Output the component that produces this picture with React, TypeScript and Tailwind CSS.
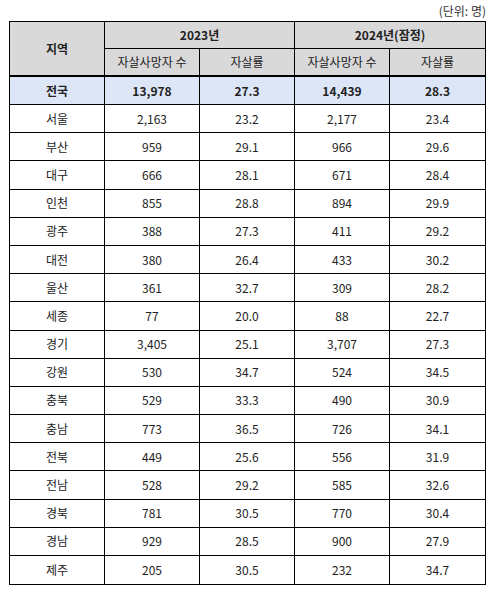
import React from "react";

const rows: [string, string, string, string, string][] = [
  ["서울", "2,163", "23.2", "2,177", "23.4"],
  ["부산", "959", "29.1", "966", "29.6"],
  ["대구", "666", "28.1", "671", "28.4"],
  ["인천", "855", "28.8", "894", "29.9"],
  ["광주", "388", "27.3", "411", "29.2"],
  ["대전", "380", "26.4", "433", "30.2"],
  ["울산", "361", "32.7", "309", "28.2"],
  ["세종", "77", "20.0", "88", "22.7"],
  ["경기", "3,405", "25.1", "3,707", "27.3"],
  ["강원", "530", "34.7", "524", "34.5"],
  ["충북", "529", "33.3", "490", "30.9"],
  ["충남", "773", "36.5", "726", "34.1"],
  ["전북", "449", "25.6", "556", "31.9"],
  ["전남", "528", "29.2", "585", "32.6"],
  ["경북", "781", "30.5", "770", "30.4"],
  ["경남", "929", "28.5", "900", "27.9"],
  ["제주", "205", "30.5", "232", "34.7"],
];

const font = { fontFamily: '"Noto Sans CJK KR", "Noto Sans", sans-serif' };

export default function App() {
  return (
    <div className="w-[497px] h-[594px] bg-white text-[12px] text-[#222]" style={font}>
      <div className="flex justify-end pr-[11px] pt-[3px] h-[21px] text-[12px] text-[#333] leading-[16px]">
        (단위: 명)
      </div>
      <div className="ml-[9px] w-[477px] border border-black">
        <div className="grid grid-cols-5 bg-[#d9d9d9] border-b-2 border-black">
          <div className="row-span-2 flex items-center justify-center font-bold border-r border-black">지역</div>
          <div className="col-span-2 h-[27px] flex items-center justify-center font-bold border-r border-b border-black">2023년</div>
          <div className="col-span-2 h-[27px] flex items-center justify-center font-bold border-b border-black">2024년(잠정)</div>
          <div className="h-[26px] flex items-center justify-center border-r border-black">자살사망자 수</div>
          <div className="h-[26px] flex items-center justify-center border-r border-black">자살률</div>
          <div className="h-[26px] flex items-center justify-center border-r border-black">자살사망자 수</div>
          <div className="h-[26px] flex items-center justify-center">자살률</div>
        </div>
        <div className="grid grid-cols-5 h-[28px] bg-[#dde6f7] font-bold border-b border-black">
          {["전국", "13,978", "27.3", "14,439", "28.3"].map((c, i) => (
            <div key={i} className={`flex items-center justify-center ${i < 4 ? "border-r border-black" : ""}`}>{c}</div>
          ))}
        </div>
        {rows.map((r, ri) => (
          <div key={ri} className={`grid grid-cols-5 h-[28.2px] ${ri < rows.length - 1 ? "border-b border-black" : ""}`}>
            {r.map((c, i) => (
              <div key={i} className={`flex items-center justify-center ${i < 4 ? "border-r border-black" : ""}`}>{c}</div>
            ))}
          </div>
        ))}
      </div>
    </div>
  );
}
